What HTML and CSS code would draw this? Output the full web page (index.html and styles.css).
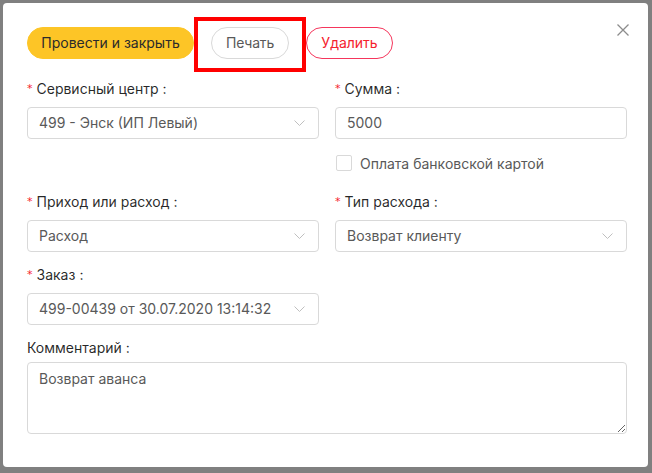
FILE: index.html
```html
<!DOCTYPE html>
<html lang="ru">
<head>
<meta charset="utf-8">
<title>Расход</title>
<link rel="stylesheet" href="styles.css">
</head>
<body>
<div class="modal">
  <button class="close" aria-label="Закрыть">
    <svg width="12" height="12" viewBox="0 0 12 12"><path d="M0.5 0.5 L11.5 11.5 M11.5 0.5 L0.5 11.5" stroke="#8c8c8c" stroke-width="1.3" fill="none"/></svg>
  </button>
  <div class="actions">
    <button class="btn btn-primary">Провести и закрыть</button>
    <button class="btn btn-default">Печать</button>
    <button class="btn btn-danger">Удалить</button>
    <div class="highlight"></div>
  </div>

  <div class="row row-first">
    <div class="item">
      <div class="label"><span class="req">*</span>Сервисный центр<span class="colon">:</span></div>
      <div class="select"><span>499 - Энск (ИП Левый)</span><svg class="arrow" width="11" height="6" viewBox="0 0 11 6"><path d="M0.5 0.5 L5.5 5.5 L10.5 0.5" stroke="#bfbfbf" stroke-width="1" fill="none"/></svg></div>
    </div>
    <div class="item">
      <div class="label"><span class="req">*</span>Сумма<span class="colon">:</span></div>
      <div class="input">5000</div>
      <label class="check"><span class="box"></span><span>Оплата банковской картой</span></label>
    </div>
  </div>

  <div class="row">
    <div class="item">
      <div class="label"><span class="req">*</span>Приход или расход<span class="colon">:</span></div>
      <div class="select"><span>Расход</span><svg class="arrow" width="11" height="6" viewBox="0 0 11 6"><path d="M0.5 0.5 L5.5 5.5 L10.5 0.5" stroke="#bfbfbf" stroke-width="1" fill="none"/></svg></div>
    </div>
    <div class="item">
      <div class="label"><span class="req">*</span>Тип расхода<span class="colon">:</span></div>
      <div class="select"><span>Возврат клиенту</span><svg class="arrow" width="11" height="6" viewBox="0 0 11 6"><path d="M0.5 0.5 L5.5 5.5 L10.5 0.5" stroke="#bfbfbf" stroke-width="1" fill="none"/></svg></div>
    </div>
  </div>

  <div class="row">
    <div class="item">
      <div class="label"><span class="req">*</span>Заказ<span class="colon">:</span></div>
      <div class="select"><span>499-00439 от 30.07.2020 13:14:32</span><svg class="arrow" width="11" height="6" viewBox="0 0 11 6"><path d="M0.5 0.5 L5.5 5.5 L10.5 0.5" stroke="#bfbfbf" stroke-width="1" fill="none"/></svg></div>
    </div>
    <div class="item"></div>
  </div>

  <div class="comment">
    <div class="label label-tight">Комментарий<span class="colon">:</span></div>
    <textarea class="textarea">Возврат аванса</textarea>
  </div>
</div>
</body>
</html>
```
FILE: styles.css
```css
* { box-sizing: border-box; }
html, body { margin: 0; padding: 0; }
body {
  background: #808080;
  width: 652px;
  height: 473px;
  padding: 3px 4px 6px 3px;
  font-family: "Inter", "Roboto", "Liberation Sans", sans-serif;
  font-size: 14px;
  color: rgba(0,0,0,0.85);
  overflow: hidden;
}
.modal {
  position: relative;
  background: #fff;
  border-radius: 4px;
  width: 645px;
  height: 464px;
  padding: 24px 21px 24px 24px;
}
.close {
  position: absolute;
  top: 21px;
  right: 19px;
  width: 12px;
  height: 12px;
  padding: 0;
  border: 0;
  background: none;
  display: flex;
}
.actions {
  position: relative;
  display: flex;
  gap: 17px;
  height: 32px;
  margin-bottom: 19px;
}
.btn {
  height: 32px;
  margin: 0;
  border-radius: 16px;
  font-family: inherit;
  font-size: 14px;
  padding: 0;
  line-height: 30px;
  text-align: center;
  white-space: nowrap;
  border: 1px solid #d9d9d9;
  background: #fff;
  color: #595959;
}
.btn-primary {
  width: 167px;
  background: #fdc526;
  border-color: #fdc526;
  color: #2b2b2b;
}
.btn-default { width: 78px; letter-spacing: -0.2px; }
.btn-danger {
  width: 87px;
  border-color: #f5365c;
  color: #f5222d;
}
.highlight {
  position: absolute;
  left: 167px;
  top: -10px;
  width: 112px;
  height: 55px;
  border: 4px solid #ff0000;
  pointer-events: none;
}
.row {
  display: grid;
  grid-template-columns: 292px 292px;
  column-gap: 16px;
  margin-bottom: 12px;
}
.row-first { margin-bottom: 16px; }
.label {
  line-height: 21px;
  height: 21px;
  margin-bottom: 8px;
  color: rgba(0,0,0,0.85);
  white-space: nowrap;
}
.label-tight { margin-bottom: 4px; }
.req {
  color: #f5222d;
  font-family: "DejaVu Sans", sans-serif;
  font-size: 11px;
  margin-right: 4px;
  position: relative;
  top: -2px;
}
.colon { margin-left: 4px; }
.select, .input {
  height: 32px;
  border: 1px solid #d9d9d9;
  border-radius: 4px;
  padding: 0 11px;
  line-height: 30px;
  color: #595959;
  display: flex;
  align-items: center;
  justify-content: space-between;
  white-space: nowrap;
}
.arrow { flex: none; margin-right: 2px; }
.check {
  display: flex;
  align-items: center;
  gap: 8px;
  height: 24px;
  margin-top: 12px;
  color: #595959;
}
.box {
  width: 16px;
  height: 16px;
  border: 1px solid #d9d9d9;
  border-radius: 2px;
  margin-left: 1px;
}
.comment { width: 600px; }
.textarea {
  display: block;
  width: 600px;
  height: 72px;
  border: 1px solid #d9d9d9;
  border-radius: 4px;
  padding: 5px 11px;
  font-family: inherit;
  font-size: 14px;
  line-height: 21px;
  color: #595959;
  resize: vertical;
  outline: none;
}
```
